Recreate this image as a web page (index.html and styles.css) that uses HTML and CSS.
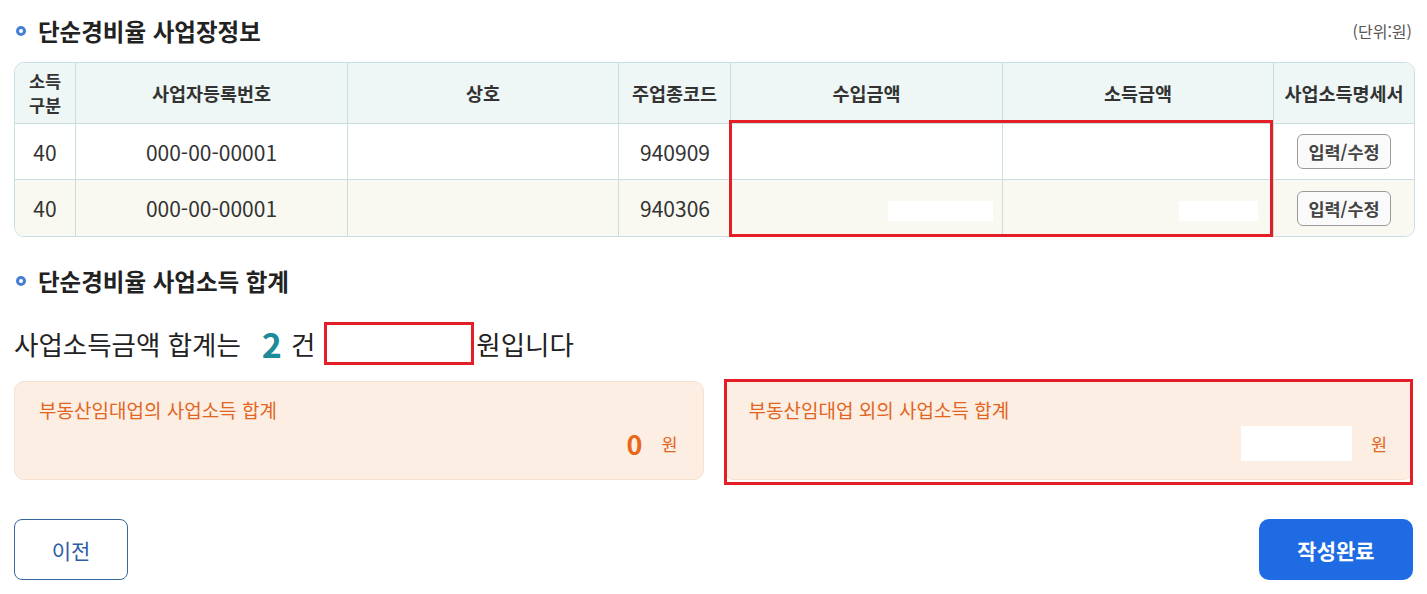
FILE: index.html
```html
<!DOCTYPE html>
<html lang="ko">
<head>
  <meta charset="UTF-8">
  <meta name="viewport" content="width=device-width, initial-scale=1.0">
  <title>단순경비율 사업소득</title>
  <link rel="stylesheet" href="styles.css">
</head>
<body>
  <div class="section-head">
    <h3 class="sec-title"><span class="dot"></span>단순경비율 사업장정보</h3>
    <span class="unit">(단위:원)</span>
  </div>

  <div class="table-wrap">
    <table class="biz-table">
      <colgroup>
        <col style="width:61px">
        <col style="width:272px">
        <col style="width:271px">
        <col style="width:112px">
        <col style="width:272px">
        <col style="width:271px">
        <col style="width:140px">
      </colgroup>
      <thead>
        <tr>
          <th class="two-line">소득<br>구분</th>
          <th>사업자등록번호</th>
          <th>상호</th>
          <th>주업종코드</th>
          <th>수입금액</th>
          <th>소득금액</th>
          <th>사업소득명세서</th>
        </tr>
      </thead>
      <tbody>
        <tr>
          <td>40</td>
          <td>000-00-00001</td>
          <td></td>
          <td class="num">940909</td>
          <td class="num"></td>
          <td class="num"></td>
          <td><button type="button" class="btn-edit">입력/수정</button></td>
        </tr>
        <tr class="alt">
          <td>40</td>
          <td>000-00-00001</td>
          <td></td>
          <td class="num">940306</td>
          <td class="num pad-a"><span class="blank w105"></span></td>
          <td class="num pad-b"><span class="blank w79"></span></td>
          <td><button type="button" class="btn-edit">입력/수정</button></td>
        </tr>
      </tbody>
    </table>
    <div class="mark mark-table"></div>
  </div>

  <h3 class="sec-title sec-two"><span class="dot"></span>단순경비율 사업소득 합계</h3>

  <div class="total-line">
    <span>사업소득금액 합계는</span>
    <strong class="count">2</strong>
    <span>건</span>
    <span class="total-box"></span>
    <span>원입니다</span>
  </div>

  <div class="cards">
    <div class="card">
      <p class="card-title">부동산임대업의 사업소득 합계</p>
      <div class="card-value">
        <strong class="amount">0</strong>
        <span class="won">원</span>
      </div>
    </div>
    <div class="card">
      <p class="card-title">부동산임대업 외의 사업소득 합계</p>
      <div class="card-value">
        <span class="blank-amount"></span>
        <span class="won">원</span>
      </div>
      <div class="mark mark-card"></div>
    </div>
  </div>

  <div class="actions">
    <button type="button" class="btn-prev">이전</button>
    <button type="button" class="btn-done">작성완료</button>
  </div>
</body>
</html>
```

FILE: styles.css
```css
body {
  font-family: "Noto Sans CJK KR", "Noto Sans", sans-serif;
  margin: 0;
  padding: 0 14px;
  background-color: #ffffff;
  color: #222222;
}

.section-head {
  display: flex;
  justify-content: space-between;
  align-items: center;
  margin-top: 16px;
}

.sec-title {
  display: flex;
  align-items: center;
  margin: 0;
  font-size: 23.5px;
  line-height: 30px;
  font-weight: bold;
  color: #222222;
}

.dot {
  flex: none;
  display: inline-block;
  width: 10px;
  height: 10px;
  box-sizing: border-box;
  border: 3px solid #467ed4;
  border-radius: 50%;
  margin: 0 12px 0 2px;
}

.unit {
  font-size: 16px;
  color: #555555;
  margin-right: 1px;
}

.table-wrap {
  position: relative;
  margin-top: 16px;
}

.biz-table {
  width: 100%;
  table-layout: fixed;
  border-collapse: separate;
  border-spacing: 0;
  border: 1px solid #c9dee3;
  border-radius: 10px;
  overflow: hidden;
}

.biz-table th,
.biz-table td {
  border-right: 1px solid #c9dee3;
  border-bottom: 1px solid #c9dee3;
  text-align: center;
  padding: 0;
}

.biz-table th:last-child,
.biz-table td:last-child {
  border-right: none;
}

.biz-table tbody tr:last-child td {
  border-bottom: none;
  height: 56px;
}

.biz-table th {
  height: 60px;
  background-color: #eef7f6;
  font-size: 18.5px;
  line-height: 23px;
  font-weight: bold;
  color: #333333;
}

.biz-table th.two-line {
  font-size: 17.5px;
  line-height: 24px;
}

.biz-table td {
  height: 55px;
  font-size: 21px;
  color: #333333;
  background-color: #ffffff;
}

.biz-table tr.alt td {
  background-color: #f9f9f1;
}

.biz-table td.num {
  text-align: right;
  padding-right: 20px;
}

.biz-table td.pad-a {
  padding-right: 9px;
}

.biz-table td.pad-b {
  padding-right: 15px;
}

.blank {
  display: inline-block;
  height: 20px;
  vertical-align: middle;
  background-color: #ffffff;
}

.w105 {
  width: 105px;
}

.w79 {
  width: 79px;
}

.btn-edit {
  font-family: inherit;
  font-size: 17.5px;
  font-weight: bold;
  color: #444444;
  background-color: #fafafa;
  border: 1px solid #9a9a9a;
  border-radius: 6px;
  padding: 0 10px;
  height: 35px;
  cursor: pointer;
}

.mark {
  position: absolute;
  border: 3px solid #e31e26;
  pointer-events: none;
}

.mark-table {
  left: 715px;
  top: 58px;
  width: 538px;
  height: 111px;
}

.sec-two {
  margin-top: 29px;
}

.total-line {
  display: flex;
  align-items: center;
  height: 44px;
  margin-top: 25px;
  font-size: 26.5px;
  color: #222222;
}

.count {
  font-size: 34px;
  color: #1c8a99;
  margin: 0 9px 0 21px;
}

.total-box {
  display: inline-block;
  width: 144px;
  height: 37px;
  border: 3px solid #e31e26;
  margin: 0 2px 0 9px;
}

.cards {
  display: grid;
  grid-template-columns: 1fr 1fr;
  gap: 20px;
  margin-top: 16px;
}

.card {
  position: relative;
  height: 99px;
  box-sizing: border-box;
  padding: 17px 25px 0 24px;
  background-color: #fdeee3;
  border: 1px solid #f6e0d0;
  border-radius: 10px;
}

.card-title {
  margin: 0;
  font-size: 19px;
  line-height: 22px;
  color: #e0661f;
}

.card-value {
  display: flex;
  justify-content: flex-end;
  align-items: center;
  height: 40px;
  margin-top: 2px;
}

.amount {
  font-size: 27px;
  color: #e8671a;
  margin-right: 19px;
}

.won {
  font-size: 17.5px;
  color: #e0661f;
}

.blank-amount {
  display: inline-block;
  width: 111px;
  height: 35px;
  background-color: #ffffff;
  margin-right: 19px;
}

.mark-card {
  left: -1px;
  right: -1px;
  top: -3px;
  bottom: -6px;
}

.actions {
  display: flex;
  justify-content: space-between;
  margin-top: 39px;
}

.btn-prev {
  width: 114px;
  height: 61px;
  font-family: inherit;
  font-size: 21px;
  color: #2c5ea5;
  background-color: #ffffff;
  border: 1px solid #36689f;
  border-radius: 8px;
  cursor: pointer;
}

.btn-done {
  width: 154px;
  height: 61px;
  font-family: inherit;
  font-size: 21px;
  font-weight: bold;
  color: #ffffff;
  background-color: #1f6be3;
  border: none;
  border-radius: 10px;
  cursor: pointer;
}
```
